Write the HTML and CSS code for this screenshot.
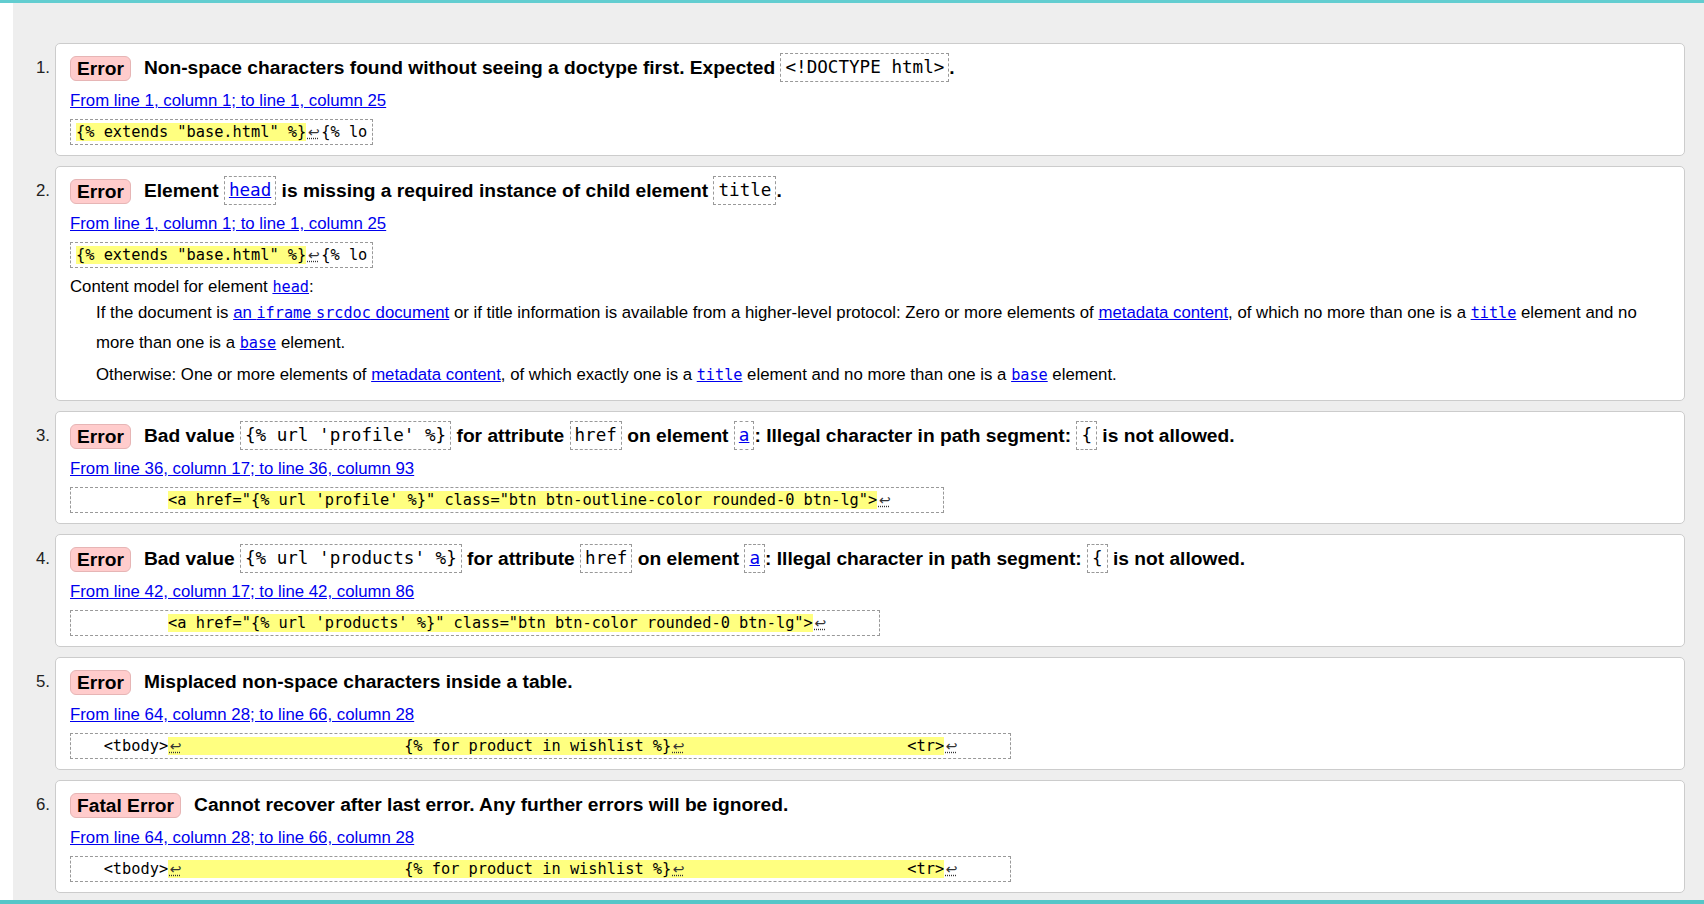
FILE: index.html
```html
<!DOCTYPE html>
<html lang="en">
<head>
<meta charset="utf-8">
<title>Validation results</title>
<link rel="stylesheet" href="styles.css">
</head>
<body>
<div class="main">
  <ol class="results">
    <li class="item">
      <span class="num">1.</span>
      <div class="card">
        <p class="msg"><span class="badge">Error</span><span class="txt">Non-space characters found without seeing a doctype first. Expected <code class="hc">&lt;!DOCTYPE html&gt;</code>.</span></p>
        <p class="loc"><a href="#">From line 1, column 1; to line 1, column 25</a></p>
        <p class="extract"><code class="ex"><b class="hl">{% extends "base.html" %}</b><span class="lf" title="Line break">↩</span>{% lo</code></p>
      </div>
    </li>
    <li class="item">
      <span class="num">2.</span>
      <div class="card">
        <p class="msg"><span class="badge">Error</span><span class="txt">Element <code class="hc"><a href="#">head</a></code> is missing a required instance of child element <code class="hc">title</code>.</span></p>
        <p class="loc"><a href="#">From line 1, column 1; to line 1, column 25</a></p>
        <p class="extract"><code class="ex"><b class="hl">{% extends "base.html" %}</b><span class="lf" title="Line break">↩</span>{% lo</code></p>
        <dl class="model">
          <dt class="cm">Content model for element <a href="#"><code class="ic">head</code></a>:</dt>
          <dd class="cmd">
            <p class="cmp">If the document is <a href="#">an <code class="ic">iframe</code> <code class="ic">srcdoc</code> document</a> or if title information is available from a higher-level protocol: Zero or more elements of <a href="#">metadata content</a>, of which no more than one is a <a href="#"><code class="ic">title</code></a> element and no more than one is a <a href="#"><code class="ic">base</code></a> element.</p>
            <p class="cmp">Otherwise: One or more elements of <a href="#">metadata content</a>, of which exactly one is a <a href="#"><code class="ic">title</code></a> element and no more than one is a <a href="#"><code class="ic">base</code></a> element.</p>
          </dd>
        </dl>
      </div>
    </li>
    <li class="item">
      <span class="num">3.</span>
      <div class="card">
        <p class="msg"><span class="badge">Error</span><span class="txt">Bad value <code class="hc">{% url 'profile' %}</code> for attribute <code class="hc">href</code> on element <code class="hc"><a href="#">a</a></code>: Illegal character in path segment: <code class="hc">{</code> is not allowed.</span></p>
        <p class="loc"><a href="#">From line 36, column 17; to line 36, column 93</a></p>
        <p class="extract"><code class="ex">          <b class="hl">&lt;a href="{% url 'profile' %}" class="btn btn-outline-color rounded-0 btn-lg"&gt;</b><span class="lf" title="Line break">↩</span>     </code></p>
      </div>
    </li>
    <li class="item">
      <span class="num">4.</span>
      <div class="card">
        <p class="msg"><span class="badge">Error</span><span class="txt">Bad value <code class="hc">{% url 'products' %}</code> for attribute <code class="hc">href</code> on element <code class="hc"><a href="#">a</a></code>: Illegal character in path segment: <code class="hc">{</code> is not allowed.</span></p>
        <p class="loc"><a href="#">From line 42, column 17; to line 42, column 86</a></p>
        <p class="extract"><code class="ex">          <b class="hl">&lt;a href="{% url 'products' %}" class="btn btn-color rounded-0 btn-lg"&gt;</b><span class="lf" title="Line break">↩</span>     </code></p>
      </div>
    </li>
    <li class="item">
      <span class="num">5.</span>
      <div class="card">
        <p class="msg"><span class="badge">Error</span><span class="txt">Misplaced non-space characters inside a table.</span></p>
        <p class="loc"><a href="#">From line 64, column 28; to line 66, column 28</a></p>
        <p class="extract"><code class="ex">   &lt;tbody&gt;<b class="hl"><span class="lf" title="Line break">↩</span>                        {% for product in wishlist %}<span class="lf" title="Line break">↩</span>                        &lt;tr&gt;</b><span class="lf" title="Line break">↩</span>     </code></p>
      </div>
    </li>
    <li class="item">
      <span class="num">6.</span>
      <div class="card">
        <p class="msg"><span class="badge">Fatal Error</span><span class="txt">Cannot recover after last error. Any further errors will be ignored.</span></p>
        <p class="loc"><a href="#">From line 64, column 28; to line 66, column 28</a></p>
        <p class="extract"><code class="ex">   &lt;tbody&gt;<b class="hl"><span class="lf" title="Line break">↩</span>                        {% for product in wishlist %}<span class="lf" title="Line break">↩</span>                        &lt;tr&gt;</b><span class="lf" title="Line break">↩</span>     </code></p>
      </div>
    </li>
  </ol>
</div>
<div class="foot"></div>
</body>
</html>
```
FILE: styles.css
```css
html, body {
  margin: 0;
  padding: 0;
}
body {
  background: #fff;
  border-top: 3px solid #62cdd0;
  font-family: "Liberation Sans", Arial, sans-serif;
  font-size: 16.8px;
  color: #000;
  height: 901px;
  overflow: hidden;
}
.main {
  margin-left: 13px;
  background: #eeeeee;
  padding: 40px 19px 7px 0;
}
.results {
  list-style: none;
  margin: 0;
  padding: 0;
  display: flex;
  flex-direction: column;
  gap: 10px;
}
.item {
  display: flex;
  align-items: flex-start;
}
.num {
  width: 37px;
  padding-right: 5px;
  padding-top: 10px;
  text-align: right;
  line-height: 30px;
  font-size: 16.8px;
  color: #222;
  flex: none;
}
.card {
  flex: 1;
  min-width: 0;
  background: #fff;
  border: 1px solid #cccccc;
  border-radius: 5px;
  padding: 9px 14px 10px 14px;
}
.msg {
  margin: 0;
  line-height: 30px;
  font-size: 19.2px;
  font-weight: bold;
  display: flex;
  align-items: center;
}
.badge {
  display: inline-block;
  flex: none;
  background: #ffcccc;
  border: 1px solid #e6b5b5;
  border-radius: 6px;
  padding: 0 6px;
  line-height: 23px;
  font-size: 19.2px;
  font-weight: bold;
  margin-right: 13px;
}
.hc {
  display: inline-block;
  vertical-align: middle;
  font-family: "DejaVu Sans Mono", monospace;
  font-weight: normal;
  font-size: 17.6px;
  line-height: 21px;
  padding: 3px 4px;
  border: 1px dashed #999;
  margin-top: -3px;
}
a {
  color: #0000ee;
  text-decoration: underline;
}
.loc {
  margin: 8px 0 0;
  line-height: 20px;
}
.extract {
  margin: 8px 0 0;
  line-height: 18px;
}
.ex {
  display: inline-block;
  font-family: "DejaVu Sans Mono", monospace;
  font-size: 15.3px;
  line-height: 18px;
  white-space: pre;
  padding: 3px 5px 3px 5px;
  border: 1px dashed #999;
  vertical-align: top;
}
.hl {
  font-weight: normal;
  background: #ffff80;
}
.lf {
  display: inline-block;
  width: 15px;
  text-align: center;
  font-family: "DejaVu Sans", sans-serif;
  font-weight: normal;
  font-size: 14px;
  color: #333;
  text-decoration: underline dotted;
}
.model {
  margin: 9px 0 0;
}
.cm {
  line-height: 20px;
}
.cmd {
  margin: 1px 0 0 26px;
}
.cmp {
  margin: 0;
  line-height: 30px;
}
.cmp + .cmp {
  margin-top: 2px;
}
.ic {
  font-family: "DejaVu Sans Mono", monospace;
  font-size: 15.2px;
}
.foot {
  height: 4px;
  background: #55c6c8;
}
```
